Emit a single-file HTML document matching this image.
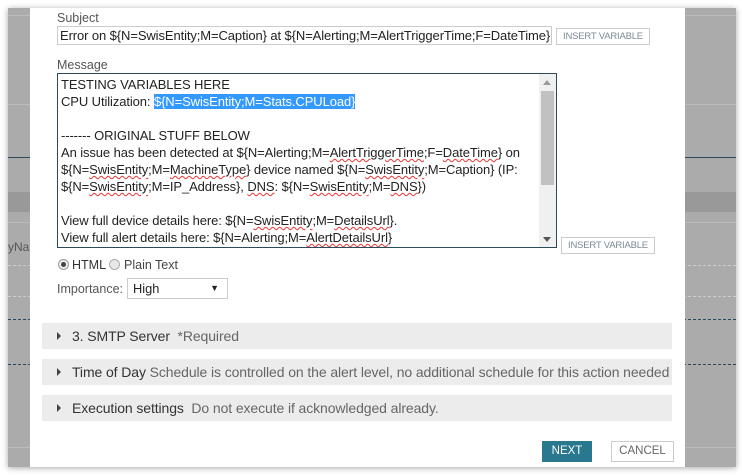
<!DOCTYPE html>
<html><head><style>
*{margin:0;padding:0;box-sizing:border-box}
body{width:742px;height:475px;background:#fff;position:relative;overflow:hidden;font-family:"Liberation Sans",sans-serif;color:#333}
.a{position:absolute}
.bg{left:8px;top:8px;width:728px;height:459px;background:#ababab;box-shadow:0 1px 6px rgba(0,0,0,.35)}
.dlg{left:30px;top:8px;width:655px;height:459px;background:#fff}
.lbl{font-size:12.5px;color:#555}
.btn{border:1px solid #ccc;font-size:9.5px;color:#7a8a96;text-align:center;background:#fff;letter-spacing:-.2px}
.ta{left:57px;top:73px;width:500px;height:175px;border:1px solid #2c4a5a;font-size:13px;line-height:17px;padding:2px 0 0 3px;color:#222;white-space:nowrap;overflow:hidden;letter-spacing:-.1px}
.sec{left:42px;width:630px;height:26px;background:#ececed;font-size:14px;line-height:26px;padding-left:30px;color:#333;white-space:nowrap;letter-spacing:-.1px}
.sec:before{content:"";position:absolute;left:15px;top:9px;border-left:4px solid #444;border-top:4px solid transparent;border-bottom:4px solid transparent}
.sec span{color:#666}
u{text-decoration:underline wavy #e33;text-decoration-thickness:1px}
</style></head><body>
<div class="a bg"></div>
<div class="a" style="left:8px;top:15px;width:728px;height:1px;background:#bbb"></div>
<div class="a" style="left:8px;top:104px;width:728px;height:1px;background:#bbb"></div>
<div class="a" style="left:8px;top:157px;width:728px;height:1px;background:#2c4a5e"></div>
<div class="a" style="left:8px;top:192px;width:728px;height:20px;background:#999"></div>
<div class="a" style="left:8px;top:222px;width:728px;height:1px;background:#bbb"></div>
<div class="a" style="left:8px;top:265px;width:728px;border-top:1px dashed #ccc"></div>
<div class="a" style="left:8px;top:296px;width:728px;border-top:1px dashed #ccc"></div>
<div class="a" style="left:8px;top:319px;width:728px;border-top:1px dashed #2c4a5e"></div>
<div class="a" style="left:8px;top:364px;width:728px;border-top:1px dashed #2c4a5e"></div>
<div class="a" style="left:8px;top:447px;width:728px;height:1px;background:#bbb"></div>
<div class="a" style="left:8px;top:240px;font-size:12px;color:#555">yNa</div>
<div class="a dlg"></div>
<div class="a lbl" style="left:57px;top:11px">Subject</div>
<div class="a" style="left:57px;top:26px;width:495px;height:19px;border:1px solid #ccc;font-size:13px;line-height:17px;padding-left:2px;color:#222;white-space:nowrap;overflow:hidden;letter-spacing:-.1px">Error on ${N=SwisEntity;M=Caption} at ${N=Alerting;M=AlertTriggerTime;F=DateTime}</div>
<div class="a btn" style="left:556px;top:28px;width:94px;height:17px;line-height:15px">INSERT VARIABLE</div>
<div class="a lbl" style="left:57px;top:58px">Message</div>
<div class="a ta">TESTING VARIABLES HERE<br>CPU Utilization: <span style="background:#3399ff;color:#fff">${N=SwisEntity;M=Stats.CPULoad}</span><br><br>------- ORIGINAL STUFF BELOW<br>An issue has been detected at ${N=Alerting;M=<u>AlertTriggerTime</u>;F=<u>DateTime</u>} on<br>${N=<u>SwisEntity</u>;M=<u>MachineType</u>} device named ${N=<u>SwisEntity</u>;M=Caption} (IP:<br>${N=<u>SwisEntity</u>;M=IP_Address}, <u>DNS</u>: ${N=<u>SwisEntity</u>;M=<u>DNS</u>})<br><br>View full device details here: ${N=<u>SwisEntity</u>;M=<u>DetailsUrl</u>}.<br>View full alert details here: ${N=Alerting;M=<u>AlertDetailsUrl</u>}</div>
<div class="a" style="left:539px;top:74px;width:17px;height:173px;background:#f0f0f0"></div>
<div class="a" style="left:541px;top:91px;width:13px;height:94px;background:#c1c1c1"></div>
<div class="a" style="left:543px;top:80px;border-bottom:5px solid #999;border-left:4px solid transparent;border-right:4px solid transparent"></div>
<div class="a" style="left:543px;top:237px;border-top:5px solid #555;border-left:4px solid transparent;border-right:4px solid transparent"></div>
<div class="a btn" style="left:561px;top:237px;width:94px;height:17px;line-height:15px">INSERT VARIABLE</div>
<div class="a" style="left:58px;top:259px;width:11px;height:11px;border-radius:50%;border:1px solid #999;background:#eee"><div style="width:5px;height:5px;border-radius:50%;background:#444;margin:2px"></div></div>
<div class="a" style="left:72px;top:258px;font-size:12.5px;color:#333">HTML</div>
<div class="a" style="left:109px;top:259px;width:11px;height:11px;border-radius:50%;border:1px solid #aaa;background:#e8e8e8"></div>
<div class="a" style="left:124px;top:258px;font-size:12.5px;color:#444">Plain Text</div>
<div class="a" style="left:57px;top:282px;font-size:12.5px;color:#555">Importance:</div>
<div class="a" style="left:127px;top:278px;width:101px;height:21px;border:1px solid #ccc;font-size:12.8px;line-height:19px;padding-left:5px;color:#222">High<span style="position:absolute;right:8px;font-size:9px">▼</span></div>
<div class="a sec" style="top:323px">3. SMTP Server &nbsp;<span>*Required</span></div>
<div class="a sec" style="top:359px">Time of Day <span>Schedule is controlled on the alert level, no additional schedule for this action needed</span></div>
<div class="a sec" style="top:395px">Execution settings &nbsp;<span>Do not execute if acknowledged already.</span></div>
<div class="a" style="left:542px;top:441px;width:50px;height:21px;background:#2a7890;color:#fff;font-size:11.5px;line-height:21px;text-align:center">NEXT</div>
<div class="a" style="left:611px;top:441px;width:63px;height:21px;border:1px solid #ccc;color:#666;font-size:11.5px;line-height:19px;text-align:center">CANCEL</div>
</body></html>
